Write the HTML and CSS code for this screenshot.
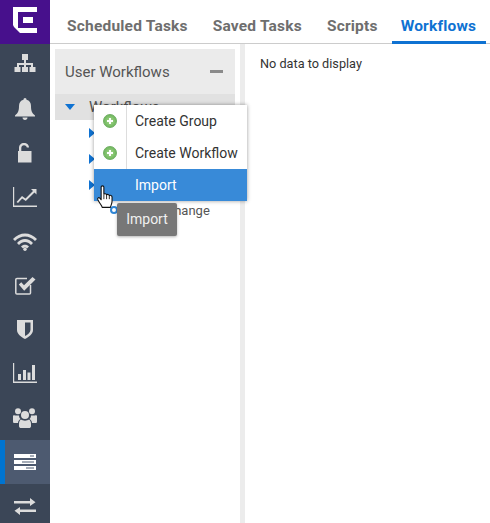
FILE: index.html
```html
<!DOCTYPE html>
<html lang="en">
<head>
    <meta charset="UTF-8">
    <title>Workflows</title>
    <link rel="stylesheet" href="styles.css">
</head>
<body>
    <div class="app">
        <nav class="sidebar">
            <div class="logo">
                <svg width="24" height="26" viewBox="0 0 24 26"><path fill="#fff" d="M0 0H24V5H5V21H24V26H7L5 24L3 22L1 20L0 18Z"/><path fill="#fff" d="M10 10H20V16H10Z"/></svg>
            </div>
            <a class="nav-item up"><svg width="22" height="22" viewBox="0 0 22 22"><path d="M8 0H14V6H12V9H19V13H21.500V18H15.500V13H17V11H12V13H14V18H8V13H10V11H5V13H6.500V18H.5V13H3V9H10V6H8Z"/></svg></a>
            <a class="nav-item up"><svg width="20" height="22" viewBox="0 0 20 22"><path d="M10 0C11 0 11.500 .8 11.500 1.800C14.500 2.500 16 5 16 8C16 13 17 15 20 17.500V18.500H0V17.500C3 15 4 13 4 8C4 5 5.500 2.500 8.500 1.800C8.500 .8 9 0 10 0ZM7.500 19.500H12.500C12.500 21 11.500 22 10 22C8.500 22 7.500 21 7.500 19.500Z"/></svg></a>
            <a class="nav-item up"><svg width="16" height="20" viewBox="0 0 16 20"><path d="M2 8V5C2 2 4 0 7 0C10 0 12 2 12 4.500H9.800C9.800 3.200 8.600 2.200 7 2.200C5.400 2.200 4.300 3.400 4.300 5V8H14.500V19.500H1V8Z"/></svg></a>
            <a class="nav-item up"><svg width="24" height="20" viewBox="0 0 24 20"><path d="M0 0H1.200V18.500H24V20H0Z"/><path d="M3.500 15L9 9L12.500 11.500L20 4L18 2H23.500V7.500L21.500 5.500L12.800 14L9.200 11.500L5 16Z"/></svg></a>
            <a class="nav-item"><svg width="24" height="18" viewBox="0 0 24 18"><path d="M0 6C6.500 -1.500 17.500 -1.500 24 6L22 8C16.500 2 7.500 2 2 8Z"/><path d="M4 10C8.500 4.500 15.500 4.500 20 10L18 12C14.500 8 9.500 8 6 12Z"/><path d="M8 13.500C10 11 14 11 16 13.500L14 15.500C13 14.300 11 14.300 10 15.500Z"/><circle cx="12" cy="16.300" r="1.700"/></svg></a>
            <a class="nav-item up"><svg width="21" height="19" viewBox="0 0 21 19"><path fill="none" stroke="#dcdcdc" stroke-width="1.500" d="M15.500 9V17C15.500 17.500 15 18 14.500 18H2C1.400 18 .8 17.500 .8 17V3.500C.8 3 1.400 2.500 2 2.500H12"/><path d="M3.800 8.500L6.300 6.300L9 9.300L17.500 1L20.500 3.500L9.200 14.700Z"/></svg></a>
            <a class="nav-item up"><svg width="16" height="19" viewBox="0 0 16 19"><path d="M0 0H16V10C16 14 12 17 8 19C4 17 0 14 0 10ZM8 2.500V16C10.500 15 13.500 12.500 13.500 9.500V2.500Z" fill-rule="evenodd"/></svg></a>
            <a class="nav-item up"><svg width="24" height="20" viewBox="0 0 24 20"><path d="M0 0H1.200V18.500H24V20H0Z"/><path d="M5 11H8V17H5ZM10 7H13V17H10ZM14.500 9.500H17.500V17H14.500ZM19 2H22V17H19Z"/></svg></a>
            <a class="nav-item"><svg width="24" height="20" viewBox="0 0 24 20"><circle cx="5" cy="3.300" r="3"/><circle cx="19" cy="3.300" r="3"/><circle cx="12" cy="7" r="4"/><path d="M0 8C0 7 1 7 2 7.500H6C6 9 6.500 10 7.500 11C6 12 5 13 5 15H1C0 15 0 14 0 13Z"/><path d="M24 8C24 7 23 7 22 7.500H18C18 9 17.500 10 16.500 11C18 12 19 13 19 15H23C24 15 24 14 24 13Z"/><path d="M8 11.500C10 13 14 13 16 11.500C17.500 12.500 18 14 18 16V18C18 19.500 17 20 16 20H8C7 20 6 19.500 6 18V16C6 14 6.500 12.500 8 11.500Z"/></svg></a>
            <a class="nav-item active"><svg width="22" height="16" viewBox="0 0 22 16"><path fill="#fff" fill-rule="evenodd" d="M0 0H22V4H0ZM16 1.500V2.500H20V1.500ZM0 6H22V10H0ZM8 7.500V8.500H20V7.500ZM0 12H22V16H0ZM12 13.500V14.500H20V13.500Z"/></svg></a>
            <a class="nav-item"><svg width="22" height="17" viewBox="0 0 22 17"><path d="M0 3H16V0L21.500 4.200L16 8V5.500H0Z"/><path d="M22 11.500H6V9L.5 12.800L6 17V14H22Z"/></svg></a>
        </nav>
        <div class="main">
            <div class="tabs">
                <a class="tab">Scheduled Tasks</a>
                <a class="tab">Saved Tasks</a>
                <a class="tab">Scripts</a>
                <a class="tab selected">Workflows</a>
            </div>
            <div class="content">
                <div class="tree-panel">
                    <div class="tree-header">
                        <span>User Workflows</span>
                        <span class="collapse"></span>
                    </div>
                    <div class="tree-row root"><span class="arrow-down"></span><span>Workflows</span></div>
                    <div class="tree-row"><span class="arrow-right"></span></div>
                    <div class="tree-row"><span class="arrow-right"></span></div>
                    <div class="tree-row"><span class="arrow-right"></span></div>
                    <div class="tree-row leaf"><span class="leaf-icon"></span><span>Device Change</span></div>
                </div>
                <div class="splitter"></div>
                <div class="details">No data to display</div>
            </div>
        </div>

        <div class="menu">
            <div class="menu-item">
                <span class="menu-icon"><span class="plus"></span></span>
                <span class="menu-label">Create Group</span>
            </div>
            <div class="menu-item">
                <span class="menu-icon"><span class="plus"></span></span>
                <span class="menu-label">Create Workflow</span>
            </div>
            <div class="menu-item hover">
                <span class="menu-icon"></span>
                <span class="menu-label">Import</span>
            </div>
        </div>
        <div class="tooltip">Import</div>
        <svg class="cursor" width="19" height="24" viewBox="0 0 17 22"><path fill="#fff" stroke="#111" stroke-width="1" stroke-linejoin="round" d="M4.500 1.800C4.500 .5 7 .5 7 1.800V8.500C7.500 7.800 9.300 7.800 9.500 9C10 8.300 11.700 8.500 12 9.700C12.700 9.200 14.500 9.500 14.500 11V15C14.500 17 13.500 18.500 13 20.500H5.500C5 18.500 3.500 17.500 1.500 13.500C.8 12 2.300 11 3.300 12L4.500 13.500Z"/><path stroke="#111" stroke-width=".8" d="M7 9V13M9.500 9V13M12 9.700V13"/></svg>
    </div>
</body>
</html>
```

FILE: styles.css
```css
* {
    box-sizing: border-box;
}

body {
    margin: 0;
    font-family: Roboto, Arial, sans-serif;
    background-color: #fff;
}

.app {
    position: relative;
    display: flex;
    width: 490px;
    height: 523px;
    overflow: hidden;
}

.sidebar {
    flex: 0 0 50px;
    display: flex;
    flex-direction: column;
    background-color: #3b4657;
}

.logo {
    flex: 0 0 44px;
    display: flex;
    justify-content: center;
    align-items: center;
    padding-bottom: 4px;
    background-color: #47108c;
}

.nav-item {
    flex: 0 0 44px;
    display: flex;
    justify-content: center;
    align-items: center;
}

.nav-item.up {
    padding-bottom: 2px;
}

.nav-item svg {
    fill: #dcdcdc;
}

.nav-item.active {
    background-color: #4d5a70;
    border-left: 5px solid #0074d0;
    padding-right: 5px;
}

.main {
    flex: 1;
    display: flex;
    flex-direction: column;
    min-width: 0;
}

.tabs {
    display: flex;
    gap: 7px;
    height: 44px;
    padding-left: 8px;
    border-bottom: 1px solid #ccc;
}

.tab {
    padding: 17px 9px 0;
    margin-bottom: -1px;
    font-size: 15.500px;
    font-weight: 700;
    letter-spacing: .2px;
    color: #6e6e6e;
    white-space: nowrap;
}

.tab.selected {
    margin-left: -2px;
    padding-right: 10px;
    color: #0f72d2;
    border-bottom: 3px solid #0f72d2;
}

.content {
    flex: 1;
    display: flex;
    min-height: 0;
}

.tree-panel {
    flex: 0 0 180px;
    margin: 5px 0 0 5px;
    color: #555;
    font-size: 13px;
}

.tree-header {
    display: flex;
    justify-content: space-between;
    align-items: center;
    height: 45px;
    padding: 0 12px 0 10px;
    background-color: #ebebeb;
    font-size: 15px;
}

.collapse {
    width: 13px;
    height: 3px;
    background-color: #8a8a8a;
}

.tree-row {
    display: flex;
    align-items: center;
    height: 26px;
    padding-left: 34px;
}

.tree-row.root {
    gap: 14px;
    padding-left: 10px;
    background-color: #e1e1e1;
    font-size: 15px;
}

.tree-row.leaf {
    gap: 6px;
    margin-top: -1px;
    padding-left: 55px;
}

.arrow-down {
    width: 0;
    height: 0;
    border-left: 5px solid transparent;
    border-right: 5px solid transparent;
    border-top: 6px solid #0f72d2;
}

.arrow-right {
    width: 0;
    height: 0;
    border-top: 5px solid transparent;
    border-bottom: 5px solid transparent;
    border-left: 6px solid #0f72d2;
}

.leaf-icon {
    width: 8px;
    height: 8px;
    border: 2px solid #2f86d6;
    border-radius: 50%;
}

.splitter {
    flex: 0 0 5px;
    margin-left: 5px;
    background-color: #ececec;
}

.details {
    flex: 1;
    padding: 12px 15px;
    font-size: 12.700px;
    line-height: 16px;
    color: #333;
}

.menu {
    position: absolute;
    left: 94px;
    top: 105px;
    width: 153px;
    background-color: #fff;
    box-shadow: 0 0 4px rgba(0, 0, 0, 0.4);
}

.menu-item {
    display: flex;
    align-items: center;
    height: 32px;
    font-size: 14px;
    color: #333;
}

.menu-item.hover {
    background-color: #388ad8;
    color: #fff;
}

.menu-icon {
    flex: 0 0 33px;
    height: 100%;
    display: flex;
    justify-content: center;
    align-items: center;
    border-right: 1px solid #ddd;
}

.hover .menu-icon {
    border-right: none;
}

.menu-label {
    padding-left: 8px;
}

.plus {
    position: relative;
    width: 14px;
    height: 14px;
    border-radius: 50%;
    background: radial-gradient(circle, #a8d98f, #5cab4c);
    border: 1px solid #6fae62;
}

.plus::before,
.plus::after {
    content: "";
    position: absolute;
    background-color: #fff;
}

.plus::before {
    left: 3px;
    top: 5px;
    width: 6px;
    height: 2px;
}

.plus::after {
    left: 5px;
    top: 3px;
    width: 2px;
    height: 6px;
}

.tooltip {
    position: absolute;
    left: 117px;
    top: 203px;
    width: 60px;
    height: 33px;
    border-radius: 2px;
    background-color: #777;
    box-shadow: 0 1px 3px rgba(0, 0, 0, 0.3);
    color: #f0f0f0;
    font-size: 14px;
    line-height: 33px;
    text-align: center;
}

.cursor {
    position: absolute;
    left: 96px;
    top: 185px;
}
```
